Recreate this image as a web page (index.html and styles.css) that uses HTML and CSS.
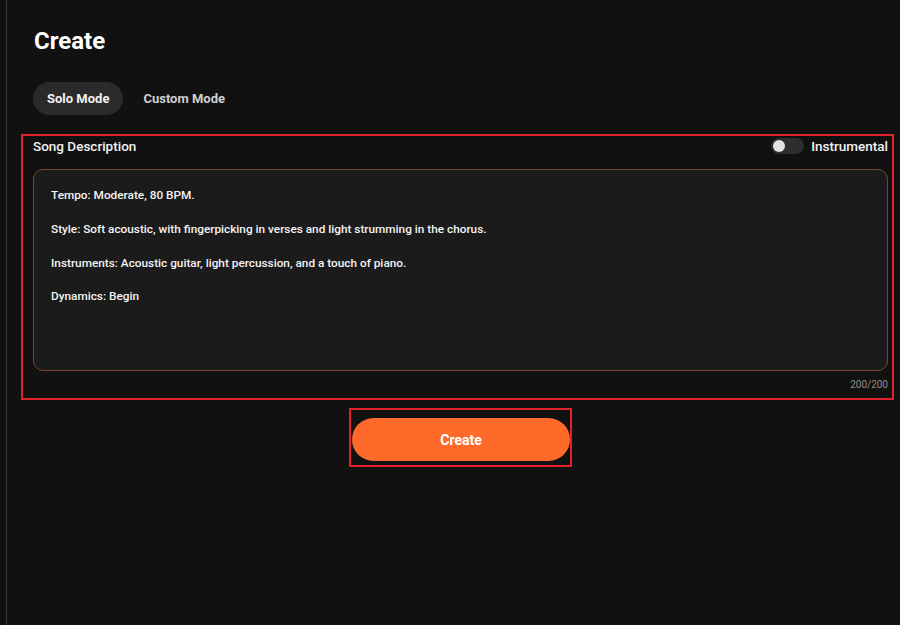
FILE: index.html
```html
<!DOCTYPE html>
<html lang="en">
<head>
    <meta charset="UTF-8">
    <meta name="viewport" content="width=device-width, initial-scale=1.0">
    <title>Create</title>
    <link rel="stylesheet" href="styles.css">
</head>
<body>
    <div class="page">
        <div class="rail"></div>
        <main class="main">
            <h1 class="title">Create</h1>
            <div class="tabs">
                <button class="tab active">Solo Mode</button>
                <button class="tab">Custom Mode</button>
            </div>

            <section class="desc-box">
                <div class="desc-head">
                    <span class="label">Song Description</span>
                    <label class="switch">
                        <span class="track"><span class="knob"></span></span>
                        <span class="label">Instrumental</span>
                    </label>
                </div>
                <div class="textarea">
                    <p>Tempo: Moderate, 80 BPM.</p>
                    <p>Style: Soft acoustic, with fingerpicking in verses and light strumming in the chorus.</p>
                    <p>Instruments: Acoustic guitar, light percussion, and a touch of piano.</p>
                    <p>Dynamics: Begin</p>
                </div>
                <div class="counter">200/200</div>
            </section>

            <div class="actions">
                <div class="create-wrap">
                    <button class="create-btn">Create</button>
                </div>
            </div>
        </main>
    </div>
</body>
</html>
```

FILE: styles.css
```css
* {
    box-sizing: border-box;
    font-family: Roboto, "Noto Sans", sans-serif;
}

body {
    margin: 0;
    background: #111111;
    color: #fff;
    height: 625px;
    overflow: hidden;
}

.page {
    display: flex;
    height: 100%;
}

.rail {
    width: 8px;
    border-right: 1px solid #3a3a3a;
    margin-left: -1px;
}

.main {
    flex: 1;
    padding: 0 6px 0 14px;
}

.title {
    margin: 27px 0 0 13px;
    font-size: 24px;
    font-weight: 700;
    line-height: 28px;
}

.tabs {
    display: flex;
    gap: 6px;
    margin: 27px 0 0 12px;
}

.tab {
    height: 33px;
    padding: 0 14px;
    border: none;
    border-radius: 17px;
    background: transparent;
    color: #cfcfcf;
    font-size: 13px;
    font-weight: 700;
    cursor: pointer;
}

.tab.active {
    background: #2a2a2a;
    color: #f2f2f2;
}

/* Song description */
.desc-box {
    margin-top: 19px;
    border: 2px solid #e3212b;
    padding: 0 4px 7px 10px;
}

.desc-head {
    display: flex;
    justify-content: space-between;
    align-items: center;
    height: 20px;
}

.label {
    font-size: 13.5px;
    font-weight: 500;
    color: #f2f2f2;
}

.switch {
    display: flex;
    align-items: center;
    gap: 7px;
}

.track {
    width: 33px;
    height: 16px;
    border-radius: 8px;
    background: #2e2e2e;
    padding: 2px;
    display: flex;
}

.knob {
    width: 12px;
    height: 12px;
    border-radius: 50%;
    background: #e2e2e2;
}

.textarea {
    margin-top: 13px;
    height: 202px;
    border: 1px solid #7a4530;
    border-radius: 10px;
    background: #1b1b1b;
    padding: 17px 17px;
}

.textarea p {
    margin: 0 0 17px;
    font-size: 11.8px;
    font-weight: 500;
    line-height: 16.8px;
    color: #f4f4f4;
}

.counter {
    text-align: right;
    font-size: 10px;
    color: #8f8f8f;
    margin-top: 8px;
    line-height: 12px;
}

/* Create button */
.actions {
    display: flex;
    justify-content: center;
    padding-left: 6px;
    margin-top: 8px;
}

.create-wrap {
    border: 2px solid #e3212b;
    padding: 8px 0 4px 1px;
}

.create-btn {
    width: 218px;
    height: 43px;
    border: none;
    border-radius: 22px;
    background: #ff6a2b;
    color: #fff;
    font-size: 14px;
    font-weight: 700;
    cursor: pointer;
}
```
